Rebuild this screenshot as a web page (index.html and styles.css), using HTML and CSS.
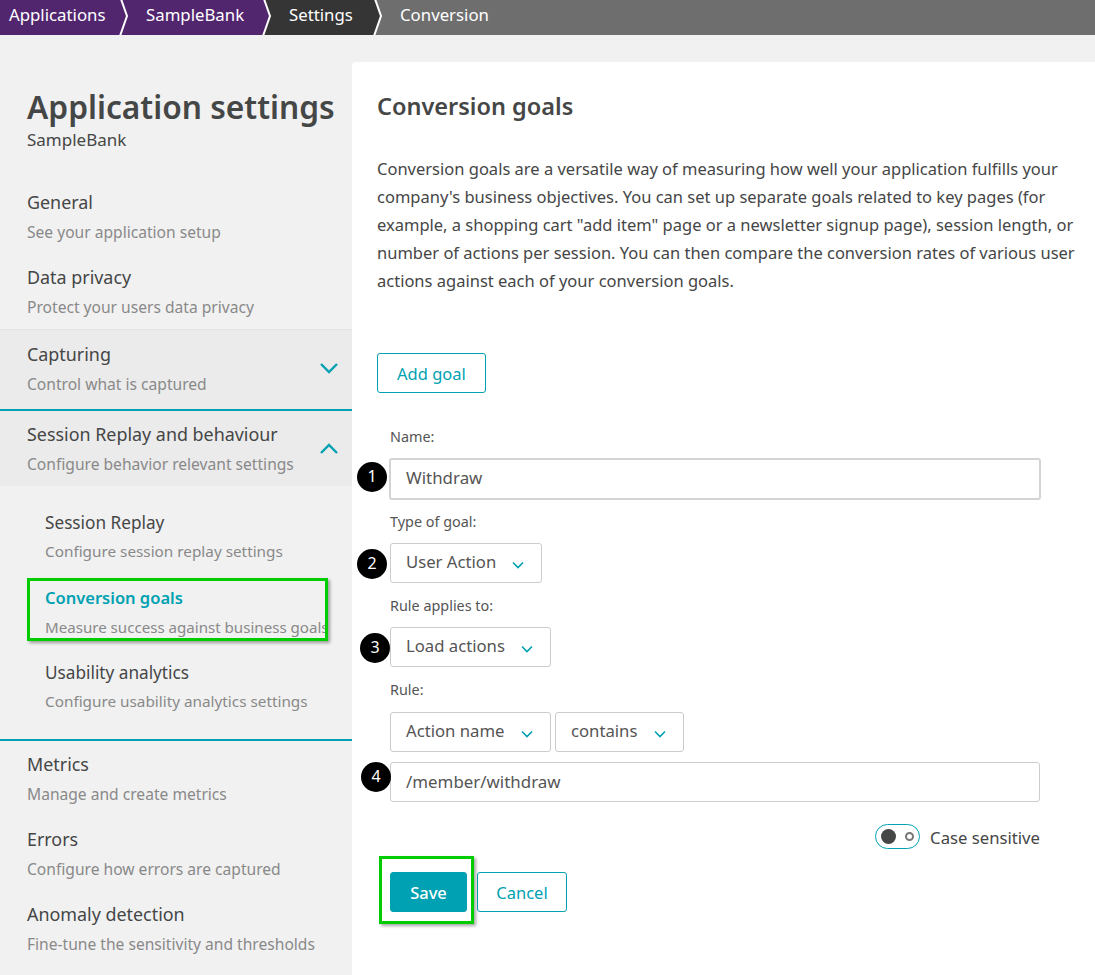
FILE: index.html
```html
<!DOCTYPE html>
<html lang="en">
<head>
    <meta charset="UTF-8">
    <meta name="viewport" content="width=device-width, initial-scale=1.0">
    <title>Conversion goals</title>
    <link rel="stylesheet" href="styles.css">
</head>
<body>

<nav class="crumbs">
    <a class="crumb crumb-app">Applications
        <svg class="crumb-tip" viewBox="0 0 12 35"><path d="M0 -1 L3 -1 L9 16 L2 36 L0 36 Z" fill="#52256f"/><path d="M3 -1 L9 16 L2 36" fill="none" stroke="#fff" stroke-width="2"/></svg>
    </a>
    <a class="crumb crumb-bank">SampleBank
        <svg class="crumb-tip" viewBox="0 0 12 35"><path d="M0 -1 L3 -1 L9 16 L2 36 L0 36 Z" fill="#52256f"/><path d="M3 -1 L9 16 L2 36" fill="none" stroke="#fff" stroke-width="2"/></svg>
    </a>
    <a class="crumb crumb-settings">Settings
        <svg class="crumb-tip" viewBox="0 0 12 35"><path d="M0 -1 L3 -1 L9 16 L2 36 L0 36 Z" fill="#353535"/><path d="M3 -1 L9 16 L2 36" fill="none" stroke="#fff" stroke-width="2"/></svg>
    </a>
    <a class="crumb crumb-current">Conversion</a>
</nav>

<div class="page">
    <aside class="sidebar">
        <h1>Application settings</h1>
        <p class="app-name">SampleBank</p>

        <ul class="menu">
            <li class="menu-item"><b>General</b><span>See your application setup</span></li>
            <li class="menu-item"><b>Data privacy</b><span>Protect your users data privacy</span></li>
            <li class="menu-item group capturing">
                <b>Capturing</b><span>Control what is captured</span>
                <svg class="group-arrow" viewBox="0 0 20 12"><path d="M2 2 L10 10 L18 2" fill="none" stroke="#00a1b2" stroke-width="2.4"/></svg>
            </li>
            <li class="menu-item group session">
                <b>Session Replay and behaviour</b><span>Configure behavior relevant settings</span>
                <svg class="group-arrow" viewBox="0 0 20 12"><path d="M2 10 L10 2 L18 10" fill="none" stroke="#00a1b2" stroke-width="2.4"/></svg>
            </li>
            <li class="submenu">
                <div class="menu-item sub"><b>Session Replay</b><span>Configure session replay settings</span></div>
                <div class="menu-item sub active"><b>Conversion goals</b><span>Measure success against business goals</span></div>
                <div class="menu-item sub"><b>Usability analytics</b><span>Configure usability analytics settings</span></div>
            </li>
            <li class="menu-item"><b>Metrics</b><span>Manage and create metrics</span></li>
            <li class="menu-item"><b>Errors</b><span>Configure how errors are captured</span></li>
            <li class="menu-item"><b>Anomaly detection</b><span>Fine-tune the sensitivity and thresholds</span></li>
        </ul>
    </aside>

    <main class="content">
        <h2>Conversion goals</h2>
        <p class="intro">Conversion goals are a versatile way of measuring how well your application fulfills your company's business objectives. You can set up separate goals related to key pages (for example, a shopping cart "add item" page or a newsletter signup page), session length, or number of actions per session. You can then compare the conversion rates of various user actions against each of your conversion goals.</p>

        <button class="btn btn-outline add-goal">Add goal</button>

        <form class="goal-form">
            <label>Name:</label>
            <div class="input input-focus">Withdraw</div>

            <label>Type of goal:</label>
            <div class="row"><div class="select select-type">User Action
                <svg viewBox="0 0 12 8"><path d="M1 1.5 L6 6.5 L11 1.5" fill="none" stroke="#00a1b2" stroke-width="1.6"/></svg>
            </div></div>

            <label>Rule applies to:</label>
            <div class="row"><div class="select select-wide">Load actions
                <svg viewBox="0 0 12 8"><path d="M1 1.5 L6 6.5 L11 1.5" fill="none" stroke="#00a1b2" stroke-width="1.6"/></svg>
            </div></div>

            <label class="rule-label">Rule:</label>
            <div class="row">
                <div class="select select-wide">Action name
                    <svg viewBox="0 0 12 8"><path d="M1 1.5 L6 6.5 L11 1.5" fill="none" stroke="#00a1b2" stroke-width="1.6"/></svg>
                </div>
                <div class="select select-op">contains
                    <svg viewBox="0 0 12 8"><path d="M1 1.5 L6 6.5 L11 1.5" fill="none" stroke="#00a1b2" stroke-width="1.6"/></svg>
                </div>
            </div>
            <div class="input rule-value">/member/withdraw</div>

            <div class="case-row">
                <span class="toggle"><i class="knob"></i><i class="dot"></i></span>
                <span class="case-label">Case sensitive</span>
            </div>

            <div class="actions">
                <button type="button" class="btn btn-primary">Save</button>
                <button type="button" class="btn btn-outline btn-cancel">Cancel</button>
            </div>
        </form>
    </main>
</div>

<!-- annotations drawn on top of the screenshot -->
<span class="step step-1">1</span>
<span class="step step-2">2</span>
<span class="step step-3">3</span>
<span class="step step-4">4</span>
<div class="mark mark-menu"></div>
<div class="mark mark-save"></div>

</body>
</html>
```

FILE: styles.css
```css
* {
    box-sizing: border-box;
}
html, body {
    margin: 0;
    height: 975px;
    overflow: hidden;
}
body {
    font-family: "Noto Sans", "Open Sans", sans-serif;
    color: #454646;
    background-color: #f1f1f1;
    position: relative;
}

/* breadcrumb */
.crumbs {
    display: flex;
    height: 35px;
    color: #fff;
    font-size: 16.8px;
    line-height: 30px;
}
.crumb {
    position: relative;
    padding-left: 25px;
}
.crumb-tip {
    position: absolute;
    right: -9px;
    top: 0;
    width: 12px;
    height: 35px;
    z-index: 1;
}
.crumb-app {
    width: 121px;
    padding-left: 9px;
    background-color: #52256f;
}
.crumb-bank {
    width: 143px;
    background-color: #52256f;
}
.crumb-settings {
    width: 111px;
    background-color: #353535;
}
.crumb-current {
    flex: 1;
    background-color: #6e6e6e;
}

.page {
    display: flex;
    align-items: flex-start;
    padding-top: 27px;
}

/* sidebar */
.sidebar {
    width: 352px;
    flex: none;
    padding-top: 25px;
}
h1 {
    margin: 0 0 0 27px;
    font-size: 31.7px;
    line-height: 40px;
    font-weight: 600;
    white-space: nowrap;
}
.app-name {
    margin: 1px 0 0 27px;
    font-size: 17px;
    line-height: 24px;
}
.menu {
    list-style: none;
    margin: 38px 0 0;
    padding: 0;
}
.menu-item {
    position: relative;
    display: block;
    padding: 0 0 0 27px;
    height: 75px;
    white-space: nowrap;
}
.menu-item b {
    display: block;
    font-weight: 400;
    font-size: 17.9px;
    line-height: 24px;
}
.menu-item span {
    display: block;
    margin-top: 8px;
    font-size: 15.6px;
    line-height: 20px;
    color: #898989;
}
.group {
    background-color: #ebebeb;
}
.capturing {
    height: 82px;
    margin-top: -11px;
    padding-top: 12px;
    border-top: 1px solid #e4e4e4;
    border-bottom: 2px solid #00a1b2;
}
.session {
    height: 75px;
    padding-top: 11px;
}
.group-arrow {
    position: absolute;
    right: 13px;
    top: 32px;
    width: 20px;
    height: 12px;
}
.submenu {
    height: 255px;
    padding-top: 25px;
    border-bottom: 2px solid #00a1b2;
}
.menu-item.sub {
    padding-left: 45px;
}
.menu-item.sub b {
    font-size: 17.2px;
}
.menu-item.sub span {
    margin-top: 6px;
    font-size: 15.3px;
}
.menu-item.sub.active b {
    color: #00a1b2;
    font-weight: 600;
    font-size: 16.5px;
}
.menu-item.sub.active span {
    font-size: 15.1px;
    margin-top: 7px;
}
.submenu + .menu-item {
    margin-top: 11px;
}

/* main panel */
.content {
    flex: 1;
    height: 913px;
    background-color: #fff;
    border-top-left-radius: 4px;
    padding: 27px 0 0 25px;
}
h2 {
    margin: 0;
    font-size: 23.5px;
    line-height: 34px;
    font-weight: 600;
}
.intro {
    margin: 32px 0 0;
    font-size: 16.5px;
    line-height: 28px;
    width: 712px;
}
.btn {
    font-family: inherit;
    font-size: 16.5px;
    height: 40px;
    border-radius: 3px;
    padding: 0 19px;
    cursor: pointer;
}
.btn-outline {
    background-color: #fff;
    border: 1px solid #00a1b2;
    color: #00a1b2;
}
.btn-primary {
    width: 77px;
    padding: 0;
    background-color: #00a1b2;
    border: 1px solid #00a1b2;
    color: #fff;
    font-weight: 500;
}
.btn-cancel {
    width: 90px;
    padding: 0;
}
.add-goal {
    display: block;
    margin-top: 58px;
}

/* goal form */
.goal-form {
    margin: 34px 0 0 13px;
    width: 650px;
}
.goal-form label {
    display: block;
    font-size: 14.4px;
    line-height: 20px;
    color: #555;
}
.input {
    height: 40px;
    line-height: 38px;
    padding-left: 15px;
    font-size: 16.9px;
    color: #555;
    background-color: #fff;
    border: 1px solid #ccc;
    border-radius: 3px;
}
.input-focus {
    margin-top: 11px;
    margin-left: -1px;
    width: 652px;
    height: 42px;
    line-height: 36px;
    border: 2px solid #d4d4d4;
}
.row {
    display: flex;
    gap: 4px;
    margin-top: 11px;
}
.select {
    display: flex;
    align-items: center;
    justify-content: space-between;
    height: 40px;
    padding: 0 17px 4px 15px;
    font-size: 16.7px;
    color: #555;
    border: 1px solid #ccc;
    border-radius: 3px;
}
.select svg {
    width: 12px;
    height: 8px;
    margin-top: 8px;
}
.select-type {
    width: 152px;
}
.select-wide {
    width: 161px;
}
.select-op {
    width: 129px;
}
.goal-form .input-focus + label {
    margin-top: 12px;
}
.goal-form .row + label {
    margin-top: 13px;
}
.goal-form .rule-label + .row {
    margin-top: 12px;
}
.rule-value {
    margin-top: 10px;
}
.case-row {
    display: flex;
    justify-content: flex-end;
    align-items: center;
    gap: 10px;
    margin-top: 21px;
    font-size: 16.7px;
    line-height: 25px;
}
.case-label {
    padding-top: 2px;
}
.toggle {
    display: flex;
    align-items: center;
    justify-content: space-between;
    width: 45px;
    height: 25px;
    padding: 0 5px;
    border: 1px solid #00a1b2;
    border-radius: 13px;
}
.knob {
    width: 15px;
    height: 15px;
    border-radius: 50%;
    background-color: #454646;
}
.dot {
    width: 9px;
    height: 9px;
    border: 2px solid #777;
    border-radius: 50%;
}
.actions {
    display: flex;
    gap: 10px;
    margin-top: 22px;
}

/* annotations */
.step {
    position: absolute;
    width: 30px;
    height: 30px;
    border-radius: 50%;
    background-color: #000;
    color: #fff;
    text-align: center;
    font-size: 16px;
    line-height: 29px;
}
.step-1 {
    left: 357px;
    top: 462px;
}
.step-2 {
    left: 357px;
    top: 549px;
}
.step-3 {
    left: 360px;
    top: 633px;
}
.step-4 {
    left: 361px;
    top: 762px;
}
.mark {
    position: absolute;
    border: 3px solid #00cc00;
    box-shadow: 2px 2px 3px rgba(0, 0, 0, 0.35);
}
.mark-menu {
    left: 27px;
    top: 578px;
    width: 301px;
    height: 63px;
}
.mark-save {
    left: 379px;
    top: 856px;
    width: 95px;
    height: 68px;
}
```
